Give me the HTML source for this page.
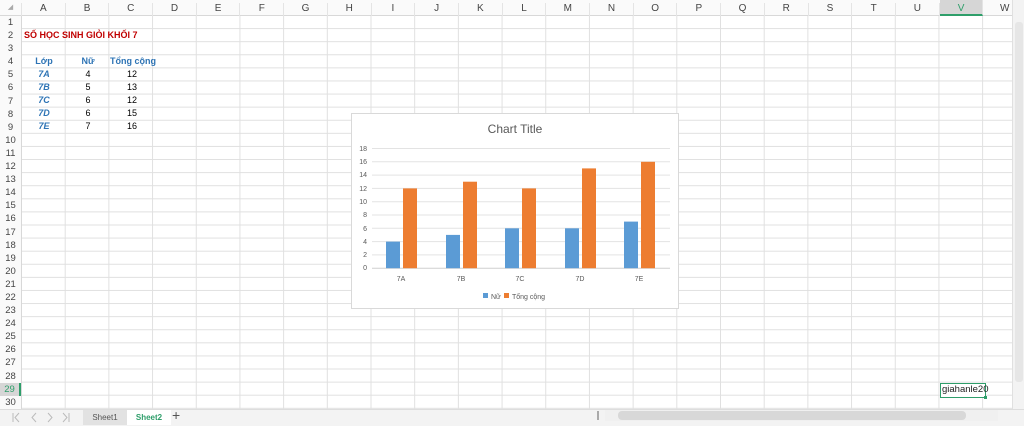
<!DOCTYPE html>
<html><head><meta charset="utf-8"><style>
*{margin:0;padding:0;box-sizing:border-box}
body{width:1024px;height:426px;overflow:hidden;background:#fff;font-family:"Liberation Sans",sans-serif;position:relative}
.grid{position:absolute;left:22px;top:16px;width:990px;height:393px;
background-image:linear-gradient(to right,#e0e0e0 1px,transparent 1px),linear-gradient(to bottom,#e0e0e0 1px,transparent 1px);
background-size:43.7px 13.1px;background-position:-1px -1px}
.colh{position:absolute;top:0;left:0;width:1012px;height:16px;background:#fafafa;border-bottom:1px solid #d8d8d8}
.colh span{position:absolute;top:3px;width:43.7px;text-align:center;font-size:10px;color:#444;border-right:1px solid #e4e4e4;height:13px}
.rowh{position:absolute;left:0;top:16px;width:22px;height:393px;background:#fafafa;border-right:1px solid #d8d8d8}
.rowh div{height:13.1px;font-size:9.5px;color:#444;text-align:center;line-height:13px}
.c{position:absolute;font-size:9px;line-height:13px;text-align:center;white-space:nowrap;font-family:"Liberation Sans","DejaVu Sans",sans-serif}
.b{color:#2e74b5;font-weight:bold}
.i{font-style:italic}
.chart{position:absolute;left:351px;top:113px;width:328px;height:196px;background:#fff;border:1px solid #d9d9d9}
</style></head><body>
<div class="grid"></div>
<div class="colh">
<span style="left:0;width:22px;color:#aaa;font-size:7px">◢</span>
<span style="left:22px">A</span><span style="left:65.7px">B</span><span style="left:109.4px">C</span><span style="left:153.1px">D</span><span style="left:196.8px">E</span><span style="left:240.5px">F</span><span style="left:284.2px">G</span><span style="left:327.9px">H</span><span style="left:371.6px">I</span><span style="left:415.3px">J</span><span style="left:459px">K</span><span style="left:502.7px">L</span><span style="left:546.4px">M</span><span style="left:590.1px">N</span><span style="left:633.8px">O</span><span style="left:677.5px">P</span><span style="left:721.2px">Q</span><span style="left:764.9px">R</span><span style="left:808.6px">S</span><span style="left:852.3px">T</span><span style="left:896px">U</span><span style="left:939.7px;background:#d6d6d6;border-bottom:2px solid #2e9e6a;color:#2e9e6a;height:16px;top:0;padding-top:3px">V</span><span style="left:983.4px">W</span>
</div>
<div class="rowh">
<div>1</div><div>2</div><div>3</div><div>4</div><div>5</div><div>6</div><div>7</div><div>8</div><div>9</div><div>10</div><div>11</div><div>12</div><div>13</div><div>14</div><div>15</div><div>16</div><div>17</div><div>18</div><div>19</div><div>20</div><div>21</div><div>22</div><div>23</div><div>24</div><div>25</div><div>26</div><div>27</div><div>28</div><div style="background:#d6d6d6;color:#2e9e6a;border-right:2px solid #2e9e6a">29</div><div>30</div>
</div>
<div class="c" style="left:24px;top:29px;color:#c00000;font-weight:bold;text-align:left">SỐ HỌC SINH GIỎI KHỐI 7</div>
<div class="c b" style="left:22px;top:55px;width:44px">Lớp</div>
<div class="c b" style="left:66px;top:55px;width:44px">Nữ</div>
<div class="c b" style="left:110px;top:55px;width:44px">Tổng cộng</div>
<div class="c b i" style="left:22px;top:68px;width:44px">7A</div><div class="c" style="left:66px;top:68px;width:44px">4</div><div class="c" style="left:110px;top:68px;width:44px">12</div>
<div class="c b i" style="left:22px;top:81px;width:44px">7B</div><div class="c" style="left:66px;top:81px;width:44px">5</div><div class="c" style="left:110px;top:81px;width:44px">13</div>
<div class="c b i" style="left:22px;top:94px;width:44px">7C</div><div class="c" style="left:66px;top:94px;width:44px">6</div><div class="c" style="left:110px;top:94px;width:44px">12</div>
<div class="c b i" style="left:22px;top:107px;width:44px">7D</div><div class="c" style="left:66px;top:107px;width:44px">6</div><div class="c" style="left:110px;top:107px;width:44px">15</div>
<div class="c b i" style="left:22px;top:120px;width:44px">7E</div><div class="c" style="left:66px;top:120px;width:44px">7</div><div class="c" style="left:110px;top:120px;width:44px">16</div>
<div class="chart">
<svg width="328" height="196" style="position:absolute;left:-1px;top:-1px" font-family="Liberation Sans, sans-serif">
<text x="164" y="20" text-anchor="middle" font-size="12" fill="#595959">Chart Title</text>
<g stroke="#e3e3e3" stroke-width="1">
<line x1="21" x2="319" y1="35.5" y2="35.5"/><line x1="21" x2="319" y1="48.8" y2="48.8"/><line x1="21" x2="319" y1="62.1" y2="62.1"/><line x1="21" x2="319" y1="75.4" y2="75.4"/><line x1="21" x2="319" y1="88.7" y2="88.7"/><line x1="21" x2="319" y1="102" y2="102"/><line x1="21" x2="319" y1="115.3" y2="115.3"/><line x1="21" x2="319" y1="128.6" y2="128.6"/><line x1="21" x2="319" y1="141.9" y2="141.9"/><line x1="21" x2="319" y1="155.2" y2="155.2" stroke="#cfcfcf"/>
</g>
<g font-size="7" fill="#595959" text-anchor="end">
<text x="16" y="38">18</text><text x="16" y="51">16</text><text x="16" y="64">14</text><text x="16" y="78">12</text><text x="16" y="91">10</text><text x="16" y="104">8</text><text x="16" y="118">6</text><text x="16" y="131">4</text><text x="16" y="144">2</text><text x="16" y="157">0</text>
</g>
<g fill="#5b9bd5">
<rect x="35" y="128.6" width="14" height="26.6"/><rect x="95" y="121.9" width="14" height="33.3"/><rect x="154" y="115.3" width="14" height="39.9"/><rect x="214" y="115.3" width="14" height="39.9"/><rect x="273" y="108.6" width="14" height="46.6"/>
</g>
<g fill="#ed7d31">
<rect x="52" y="75.4" width="14" height="79.8"/><rect x="112" y="68.7" width="14" height="86.5"/><rect x="171" y="75.4" width="14" height="79.8"/><rect x="231" y="55.4" width="14" height="99.8"/><rect x="290" y="48.8" width="14" height="106.4"/>
</g>
<g font-size="7" fill="#595959" text-anchor="middle">
<text x="50" y="168">7A</text><text x="110" y="168">7B</text><text x="169" y="168">7C</text><text x="229" y="168">7D</text><text x="288" y="168">7E</text>
</g>
<rect x="132" y="180" width="5" height="5" fill="#5b9bd5"/><text x="140" y="186" font-size="7" fill="#595959">Nữ</text>
<rect x="153" y="180" width="5" height="5" fill="#ed7d31"/><text x="161" y="186" font-size="7" fill="#595959">Tổng cộng</text>
</svg>
</div>
<div style="position:absolute;left:940px;top:383px;width:46px;height:15px;border:1.5px solid #2e9e6a;background:#fff;font-size:9.5px;line-height:12px;padding-left:1px;color:#222">giahanle20</div>
<div style="position:absolute;left:984px;top:396px;width:3px;height:3px;background:#2e9e6a"></div>
<div style="position:absolute;left:1012px;top:0;width:12px;height:409px;background:#f3f3f3;border-left:1px solid #e0e0e0">
<div style="position:absolute;left:2px;top:22px;width:8px;height:360px;background:#e6e6e6;border-radius:3px"></div>
</div>
<div style="position:absolute;left:0;top:409px;width:1024px;height:17px;background:#f3f3f3;border-top:1px solid #ddd"></div>
<svg style="position:absolute;left:10px;top:410px" width="70" height="15" fill="none" stroke="#bbb" stroke-width="1">
<line x1="3" y1="3" x2="3" y2="12"/><path d="M9 3 L5 7.5 L9 12"/><path d="M26 3 L22 7.5 L26 12"/><path d="M38 3 L42 7.5 L38 12"/><path d="M53 3 L57 7.5 L53 12"/><line x1="59" y1="3" x2="59" y2="12"/>
</svg>
<div style="position:absolute;left:83px;top:410px;width:44px;height:15px;background:#e2e2e2;font-size:8px;color:#555;text-align:center;line-height:15px">Sheet1</div>
<div style="position:absolute;left:127px;top:410px;width:44px;height:15px;background:#fff;font-size:8px;color:#2e9e6a;font-weight:bold;text-align:center;line-height:15px">Sheet2</div>
<div style="position:absolute;left:172px;top:407px;font-size:14px;color:#555;line-height:17px">+</div>
<div style="position:absolute;left:597px;top:411px;width:2px;height:9px;border-left:1px solid #aaa;border-right:1px solid #aaa"></div>
<div style="position:absolute;left:605px;top:410px;width:393px;height:11px;background:#f0f0f0"></div>
<div style="position:absolute;left:618px;top:411px;width:348px;height:9px;background:#d8d8d8;border-radius:4px"></div>
</body></html>
